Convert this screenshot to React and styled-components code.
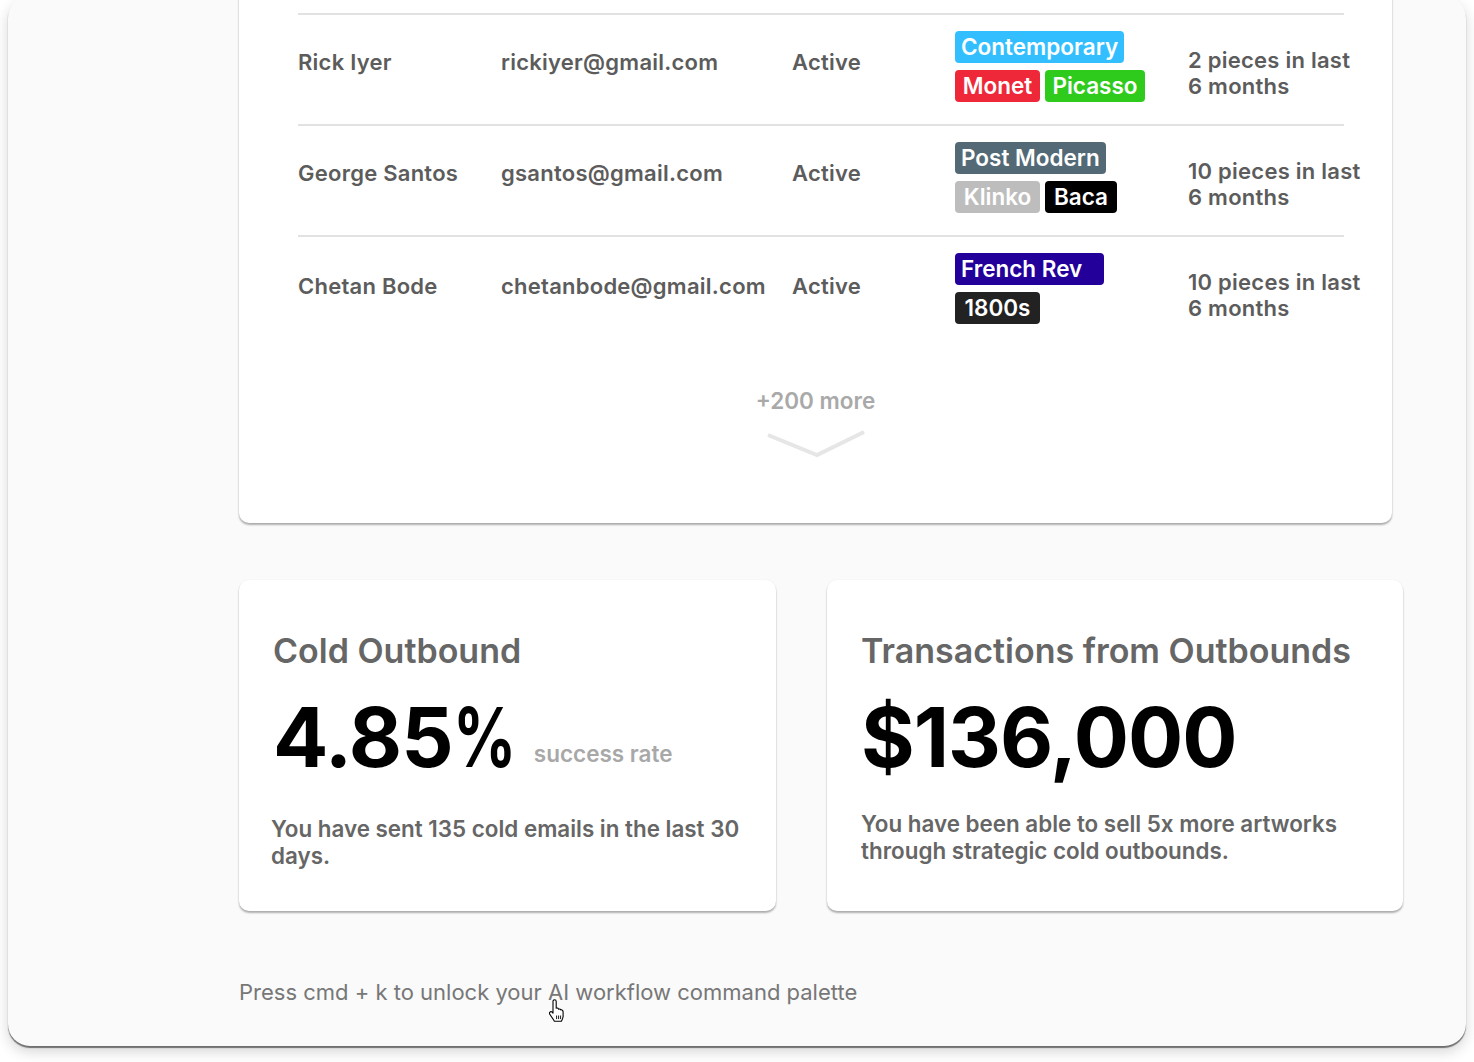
import React from "react";
import styled, { createGlobalStyle } from "styled-components";

const Global = createGlobalStyle`
  html, body { margin: 0; padding: 0; background: #ffffff; }
  body { font-family: Inter, "Noto Sans", sans-serif; overflow: hidden; }
  * { box-sizing: border-box; }
`;

const Page = styled.div`
  width: 1474px;
  height: 1062px;
  overflow: hidden;
  padding: 0 8px;
`;

const Frame = styled.div`
  margin-top: -4px;
  height: 1050px;
  background: #fafafa;
  border-radius: 22px;
  box-shadow: 0 2px 1px rgba(0, 0, 0, 0.5), 0 6px 14px rgba(0, 0, 0, 0.16);
  padding-left: 231px;
  display: flex;
  flex-direction: column;
  align-items: flex-start;
`;

const TableCard = styled.section`
  width: 1153px;
  background: #ffffff;
  border-radius: 0 0 10px 10px;
  box-shadow: 0 2px 2px rgba(0, 0, 0, 0.3), 0 0 2px rgba(0, 0, 0, 0.08);
  padding: 17px 48px 65px 59px;
  display: flex;
  flex-direction: column;
`;

const Row = styled.div`
  height: 111px;
  border-top: 2px solid #e2e2e2;
  padding-top: 16px;
  display: grid;
  grid-template-columns: 203px 291px 163px 233px 1fr;
  align-items: start;
  font-size: 22px;
  letter-spacing: 0.25px;
  font-weight: 600;
  color: #5c5c5c;
  line-height: 24px;
`;

const Cell = styled.div`
  margin-top: ${(p) => p.$top ?? 19}px;
  white-space: nowrap;
`;

const Pieces = styled.div`
  margin-top: 16px;
  line-height: 26px;
  white-space: nowrap;
`;

const TagStack = styled.div`
  display: flex;
  flex-direction: column;
  gap: 7px;
  align-items: flex-start;
  letter-spacing: 0;
`;

const TagLine = styled.div`
  display: flex;
  gap: 5px;
`;

const Tag = styled.span`
  display: inline-flex;
  align-items: center;
  justify-content: ${(p) => (p.$left ? "flex-start" : "center")};
  height: 32px;
  min-width: ${(p) => p.$w || 0}px;
  padding: 0 6px;
  border-radius: 4px;
  background: ${(p) => p.$bg};
  color: #ffffff;
  font-size: 22.5px;
  font-weight: 600;
  white-space: nowrap;
`;

const More = styled.div`
  margin-top: 43px;
  align-self: center;
  margin-left: -11px;
  display: flex;
  flex-direction: column;
  align-items: center;
  gap: 17px;
  color: #a9a9a9;
  font-size: 22.5px;
  font-weight: 600;
  line-height: 24px;
`;

const Stats = styled.div`
  margin-top: 57px;
  display: flex;
  gap: 51px;
`;

const StatCard = styled.div`
  width: ${(p) => p.$w}px;
  height: 331px;
  background: #ffffff;
  border-radius: 10px;
  box-shadow: 0 2px 2px rgba(0, 0, 0, 0.3), 0 0 2px rgba(0, 0, 0, 0.06);
  padding: 51px 30px 0 34px;
  display: flex;
  flex-direction: column;
`;

const StatTitle = styled.h2`
  margin: 0;
  font-size: 34px;
  line-height: 40px;
  font-weight: 600;
  color: #666666;
  white-space: nowrap;
`;

const BigLine = styled.div`
  margin-top: 26px;
  display: flex;
  align-items: flex-end;
`;

const BigNumber = styled.div`
  font-size: 82px;
  line-height: 82px;
  font-weight: 700;
  color: #000000;
  letter-spacing: -1px;
  white-space: nowrap;
`;

const Percent = styled.span`
  display: inline-block;
  transform: scaleX(0.76);
  transform-origin: left center;
  margin-right: -18px;
`;

const Unit = styled.span`
  margin: 0 0 12px 17px;
  font-size: 22.5px;
  line-height: 26px;
  font-weight: 600;
  color: #a8a8a8;
`;

const StatText = styled.p`
  margin: ${(p) => p.$top}px 0 0 ${(p) => p.$ml || 0}px;
  font-size: 22.4px;
  line-height: 27px;
  font-weight: 600;
  color: #666666;
`;

const Footer = styled.div`
  position: relative;
  margin-top: 68px;
  font-size: 22px;
  line-height: 26px;
  font-weight: 400;
  color: #777777;
`;

const Cursor = styled.svg`
  position: absolute;
  left: 308px;
  top: 20px;
`;

const rows = [
  {
    name: "Rick Iyer",
    email: "rickiyer@gmail.com",
    status: "Active",
    tags: [
      [{ t: "Contemporary", bg: "#33bfff", w: 169 }],
      [
        { t: "Monet", bg: "#ee2839", w: 85 },
        { t: "Picasso", bg: "#2ecb1d", w: 100 },
      ],
    ],
    pieces: ["2 pieces in last", "6 months"],
    top: 19,
  },
  {
    name: "George Santos",
    email: "gsantos@gmail.com",
    status: "Active",
    tags: [
      [{ t: "Post Modern", bg: "#536a76", w: 149 }],
      [
        { t: "Klinko", bg: "#bdbdbd", w: 85 },
        { t: "Baca", bg: "#000000", w: 72 },
      ],
    ],
    pieces: ["10 pieces in last", "6 months"],
    top: 19,
  },
  {
    name: "Chetan Bode",
    email: "chetanbode@gmail.com",
    status: "Active",
    tags: [
      [{ t: "French Rev", bg: "#220099", w: 149, left: true }],
      [{ t: "1800s", bg: "#222222", w: 85 }],
    ],
    pieces: ["10 pieces in last", "6 months"],
    top: 21,
  },
];

const Chevron = () => (
  <svg width="100" height="28" viewBox="0 0 100 28">
    <path d="M2 5 L51 25 L98 2" fill="none" stroke="#e6e6e6" strokeWidth="4" />
  </svg>
);

const HandCursor = () => (
  <Cursor width="20" height="25" viewBox="0 0 20 25">
    <path
      d="M6 2.4c0-.9.7-1.6 1.6-1.6s1.6.7 1.6 1.6V9.2l.3-.1c.8-.3 1.7.1 2 .9l.1.3c.6-.5 1.6-.4 2.1.3l.2.3c.7-.3 1.6 0 1.9.8.2.5.3 1 .3 1.6v3.6c0 1.5-.4 2.9-1.1 4.1l-.6 1.2H7.4l-.9-1.4L2.8 15.2c-.5-.7-.4-1.7.3-2.2.6-.5 1.5-.4 2.1.2L6 14.1V2.4z"
      fill="#ffffff"
      stroke="#000000"
      strokeWidth="1.1"
      strokeLinejoin="round"
    />
    <path d="M9.6 16.5v3.6M11.6 16.5v3.6M13.6 16.5v3.6" stroke="#000000" strokeWidth="0.9" />
  </Cursor>
);

export default function App() {
  return (
    <>
      <Global />
      <Page>
        <Frame>
          <TableCard>
            {rows.map((r) => (
              <Row key={r.name}>
                <Cell $top={r.top}>{r.name}</Cell>
                <Cell $top={r.top}>{r.email}</Cell>
                <Cell $top={r.top}>{r.status}</Cell>
                <TagStack>
                  {r.tags.map((line, i) => (
                    <TagLine key={i}>
                      {line.map((tg) => (
                        <Tag key={tg.t} $bg={tg.bg} $w={tg.w} $left={tg.left}>
                          {tg.t}
                        </Tag>
                      ))}
                    </TagLine>
                  ))}
                </TagStack>
                <Pieces>
                  {r.pieces[0]}
                  <br />
                  {r.pieces[1]}
                </Pieces>
              </Row>
            ))}
            <More>
              <span>+200 more</span>
              <Chevron />
            </More>
          </TableCard>

          <Stats>
            <StatCard $w={537}>
              <StatTitle>Cold Outbound</StatTitle>
              <BigLine>
                <BigNumber>
                  4.85<Percent>%</Percent>
                </BigNumber>
                <Unit>success rate</Unit>
              </BigLine>
              <StatText $top={36} $ml={-2}>
                You have sent 135 cold emails in the last 30 days.
              </StatText>
            </StatCard>
            <StatCard $w={576}>
              <StatTitle>Transactions from Outbounds</StatTitle>
              <BigLine>
                <BigNumber>$136,000</BigNumber>
              </BigLine>
              <StatText $top={31}>
                You have been able to sell 5x more artworks through strategic
                cold outbounds.
              </StatText>
            </StatCard>
          </Stats>

          <Footer>
            Press cmd + k to unlock your AI workflow command palette
            <HandCursor />
          </Footer>
        </Frame>
      </Page>
    </>
  );
}
